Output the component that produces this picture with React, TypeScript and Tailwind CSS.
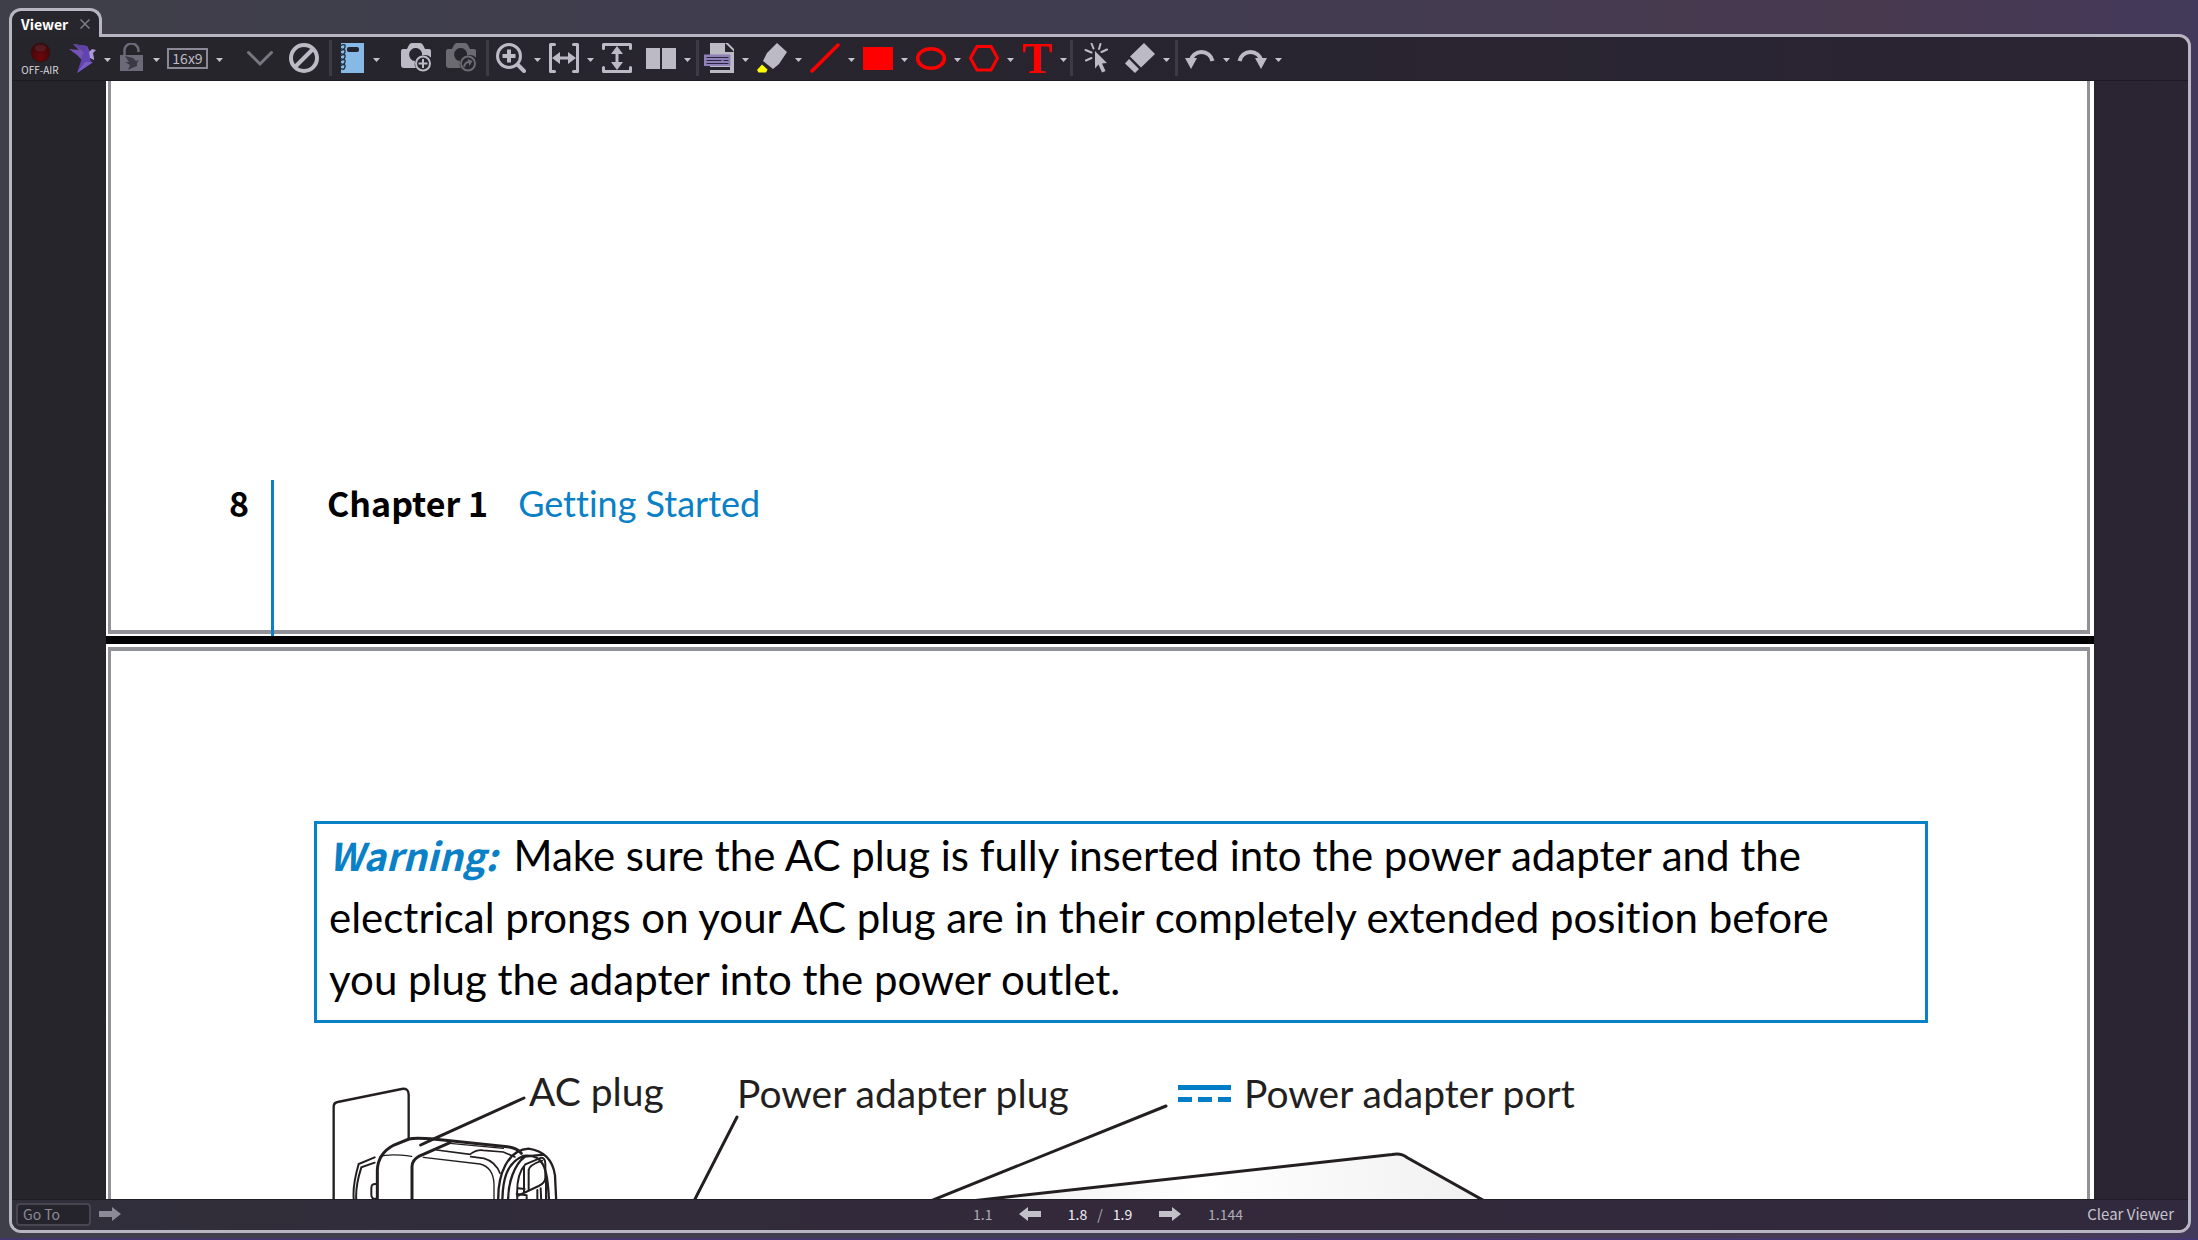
import type { ReactNode } from 'react';

const INK = '#231f20';
const LIGHT = '#bcbbc5';

function Caret({ label }: { label: string }) {
  return (
    <button type="button" aria-label={label} className="flex h-[42px] w-[15px] shrink-0 items-center pl-2">
      <svg viewBox="0 0 7 4" className="mt-1 h-1 w-[7px]">
        <path d="M0 0h7L3.5 4z" fill="#c4c3cc" />
      </svg>
    </button>
  );
}

function Tool({ label, caret, children }: { label: string; caret?: boolean; children: ReactNode }) {
  return (
    <div className="flex shrink-0 items-center">
      <button type="button" aria-label={label} className="flex h-[42px] w-[30px] items-center justify-center">
        {children}
      </button>
      {caret && <Caret label={`${label} options`} />}
    </div>
  );
}

function Icon({ children }: { children: ReactNode }) {
  return (
    <svg viewBox="0 0 30 30" fill="none" className="h-[30px] w-[30px] shrink-0">
      {children}
    </svg>
  );
}

function Separator() {
  return <div className="h-9 w-[3px] shrink-0 bg-[#3c3a45]" />;
}

function CameraBody({ fill }: { fill: string }) {
  return (
    <path
      d="M2 6h4l2-4Q9 0 11 0h8q2 0 3 2l2 4h4q2 0 2 2v6.500a9.200 9.200 0 0 0-9-2a6.500 6.500 0 1 0-7 5.500 9 9 0 0 0 .8 7H3q-3 0-3-3V8q0-2 2-2z"
      fill={fill}
    />
  );
}

function Toolbar() {
  return (
    <div role="toolbar" aria-label="Viewer tools" className="flex h-11 shrink-0 items-center border-b border-[#1c1a22] pb-px pl-[9px]">
      <button type="button" className="mr-[7px] flex h-[42px] w-[38px] shrink-0 flex-col items-center pt-[5px]">
        <svg viewBox="0 0 21 21" className="h-[21px] w-[21px]">
          <defs>
            <radialGradient id="led" cx=".5" cy=".75" r=".7">
              <stop offset="0" stopColor="#6d080b" />
              <stop offset="1" stopColor="#3c0609" />
            </radialGradient>
          </defs>
          <circle cx="10.500" cy="10.500" r="9.500" fill="url(#led)" stroke="#2c161b" />
          <ellipse cx="10.500" cy="6" rx="6" ry="3.500" fill="#5a2a2e" opacity=".6" />
        </svg>
        <span className="text-[10px] leading-[14px] whitespace-nowrap text-[#d9d8df]">OFF-AIR</span>
      </button>
      <Tool label="Broadcast" caret>
        <Icon>
          <path d="M7 1l14 2 4 8-6 9-8-8-8-6 10 1z" fill="#7553b5" />
          <path d="M7 1l14 2-2 7z" fill="#5f42a2" />
          <path d="M21 3l3 7v6l2 4-6 4-9 6 4-12 1-5z" fill="#6343b3" />
          <path d="M23 9l3-3 4 1-3 3 1 5v2l-4-2z" fill="#a99ad6" />
          <path d="M19 19l-8 11 16-11z" fill="#7a5cc0" />
        </Icon>
      </Tool>
      <div className="ml-1">
        <Tool label="Lock" caret>
          <Icon>
            <path d="M9.500 13V8a7 7 0 0 1 14-1v2" stroke="#6c6a78" strokeWidth="2.500" />
            <path d="M5 12h23v16H5z" fill="#6c6a78" />
            <path d="M10 13l8 2 3 3 3-1-2 3v3l-5 2-4 2 2-5-5-3 4 0z" fill="#3b3944" />
          </Icon>
        </Tool>
      </div>
      <div className="ml-[7px] flex shrink-0 items-center">
        <button type="button" className="flex h-[21px] w-[41px] items-center justify-center border-2 border-[#8b8996] text-[14px] leading-none text-[#bcbbc5]">
          16x9
        </button>
        <Caret label="Aspect ratio options" />
      </div>
      <div className="ml-[22px] flex shrink-0 items-center gap-[14px]">
        <Tool label="Collapse">
          <Icon>
            <path d="M3.500 9.500L15 21 26.500 9.500" stroke="#787681" strokeWidth="3" strokeLinecap="round" />
          </Icon>
        </Tool>
        <Tool label="Clear">
          <Icon>
            <circle cx="15" cy="15" r="13" stroke={LIGHT} strokeWidth="4" />
            <path d="M24 6L6 24" stroke={LIGHT} strokeWidth="4" />
          </Icon>
        </Tool>
      </div>
      <div className="mr-[3px] ml-[10px]">
        <Separator />
      </div>
      <Tool label="Notebook" caret>
        <Icon>
          <path d="M6 0h23v30H6z" fill="#86b9e6" />
          <rect x="12" y="4" width="12" height="5" rx="2" fill="#23232b" />
          {[3, 8, 13, 18, 23].map((y) => (
            <path key={y} d={`M5 ${y}q6-3 5 1t-5 1`} stroke="#23303e" strokeWidth="1.300" />
          ))}
        </Icon>
      </Tool>
      <div className="ml-[21px] flex shrink-0 gap-[15px]">
        <Tool label="Add snapshot">
          <Icon>
            <CameraBody fill={LIGHT} />
            <circle cx="22" cy="20.500" r="7" stroke={LIGHT} strokeWidth="2" />
            <path d="M22 16v9M17.500 20.500h9" stroke={LIGHT} strokeWidth="2" />
          </Icon>
        </Tool>
        <Tool label="Send snapshot">
          <Icon>
            <CameraBody fill="#6b6a70" />
            <circle cx="22" cy="20.500" r="7" stroke="#6b6a70" strokeWidth="2" />
            <path d="M18 24q1-5 5-5" stroke="#6b6a70" strokeWidth="2" />
            <path d="M21.500 16l5 2-3 5z" fill="#6b6a70" />
          </Icon>
        </Tool>
      </div>
      <div className="mr-[7px] ml-[10px]">
        <Separator />
      </div>
      <div className="flex shrink-0 items-center gap-2">
        <Tool label="Zoom" caret>
          <Icon>
            <circle cx="13" cy="13" r="11.500" stroke={LIGHT} strokeWidth="3" />
            <path d="M13 6.500v13M6.500 13h13" stroke={LIGHT} strokeWidth="4" />
            <path d="M22 22l6 6" stroke={LIGHT} strokeWidth="4" strokeLinecap="round" />
          </Icon>
        </Tool>
        <Tool label="Fit width" caret>
          <Icon>
            <path d="M5.500 1.500h-4v27h4M24.500 1.500h4v27h-4" stroke={LIGHT} strokeWidth="3" strokeLinecap="round" strokeLinejoin="round" />
            <path d="M8 15h14" stroke={LIGHT} strokeWidth="3" />
            <path d="M3 15l8-6v12zM27 15l-8-6v12z" fill={LIGHT} />
          </Icon>
        </Tool>
        <Tool label="Fit height">
          <Icon>
            <path d="M1.500 5.500v-4h27v4M1.500 24.500v4h27v-4" stroke={LIGHT} strokeWidth="3" strokeLinecap="round" strokeLinejoin="round" />
            <path d="M15 8v14" stroke={LIGHT} strokeWidth="3" />
            <path d="M15 3L9 11h12zM15 27l-6-8h12z" fill={LIGHT} />
          </Icon>
        </Tool>
        <div className="ml-[6px]">
          <Tool label="Columns" caret>
            <Icon>
              <path d="M0 5h14v21H0zM16 5h14v21H16z" fill={LIGHT} />
            </Icon>
          </Tool>
        </div>
      </div>
      <div className="mx-[5px]">
        <Separator />
      </div>
      <div className="flex shrink-0 items-center gap-2">
        <Tool label="Text layer" caret>
          <Icon>
            <path d="M6 0h15v9h9v21H6z" fill={LIGHT} />
            <path d="M21 0l9 9V6l-6-6z" fill={LIGHT} />
            <path d="M22.500 1.500v6.500h6.500z" fill="#25242c" />
            <path d="M6 24h20v3H6z" fill="#25242c" />
            <rect x="0" y="11.500" width="26.500" height="11.500" fill="#8f80b8" />
            <path d="M2.500 14.500h22M2.500 17.500h15M19.500 17.500h5M2.500 20.500h22" stroke="#2b2440" strokeWidth="1.200" />
          </Icon>
        </Tool>
        <Tool label="Highlighter" caret>
          <Icon>
            <path d="M20 0l10 9-8 12-6 5-10-8 4-8z" fill={LIGHT} />
            <path d="M5 21.500l5.500 5-1.500 3H1.500L0 27z" fill="#ffff00" />
          </Icon>
        </Tool>
        <Tool label="Line" caret>
          <Icon>
            <path d="M2 28L28 2" stroke="#ff0000" strokeWidth="3.500" strokeLinecap="round" />
          </Icon>
        </Tool>
        <Tool label="Rectangle" caret>
          <Icon>
            <path d="M0 4h30v23H0z" fill="#ff0000" />
          </Icon>
        </Tool>
        <Tool label="Ellipse" caret>
          <Icon>
            <ellipse cx="15" cy="15.500" rx="13.300" ry="9.700" stroke="#ff0000" strokeWidth="3.500" />
          </Icon>
        </Tool>
        <Tool label="Polygon" caret>
          <Icon>
            <path d="M8 3.500h14l6.500 11.500L22 27H8L1.500 15z" stroke="#ff0000" strokeWidth="3" />
          </Icon>
        </Tool>
        <Tool label="Text" caret>
          <span className="font-['Liberation_Serif',serif] text-[45px] leading-[30px] font-bold text-[#ff0000]">T</span>
        </Tool>
      </div>
      <div className="mr-[10px] ml-[3px]">
        <Separator />
      </div>
      <div className="flex shrink-0 items-center gap-3">
        <Tool label="Pointer">
          <Icon>
            <path d="M12 8l12 12-5 .5 3.500 7.500-3.500 1.500-3.500-8-3.500 4z" fill={LIGHT} />
            <path d="M8.500.5l2 5M17.500 1l-1.500 5M24 6.500l-5.500 2.500M2.500 7l6 2.500M3 17.500l5.500-2.500" stroke={LIGHT} strokeWidth="2" strokeLinecap="round" />
          </Icon>
        </Tool>
        <Tool label="Eraser" caret>
          <Icon>
            <path d="M19 0l11 11-14 13.500L5 13.500z" fill={LIGHT} />
            <path d="M4 16l10 10-4 4-10-9.500z" fill={LIGHT} />
          </Icon>
        </Tool>
      </div>
      <div className="mr-[7px] ml-[5px]">
        <Separator />
      </div>
      <div className="flex shrink-0 items-center gap-[7px]">
        <Tool label="Undo" caret>
          <Icon>
            <path d="M27.500 18a11.200 11.200 0 0 0-22 0" stroke={LIGHT} strokeWidth="4" />
            <path d="M0 15h12L6 26z" fill={LIGHT} />
          </Icon>
        </Tool>
        <Tool label="Redo" caret>
          <Icon>
            <path d="M2.500 18a11.200 11.200 0 0 1 22 0" stroke={LIGHT} strokeWidth="4" />
            <path d="M30 15H18l6 11z" fill={LIGHT} />
          </Icon>
        </Tool>
      </div>
    </div>
  );
}

function Illustration() {
  return (
    <svg
      viewBox="330 1080 1160 120"
      fill="none"
      stroke={INK}
      strokeWidth="2"
      strokeLinecap="round"
      className="absolute top-0 left-0 h-[120px] w-[1160px]"
    >
      <defs>
        <linearGradient id="lid" x1="0" x2="1" y1="0" y2="0">
          <stop offset="0" stopColor="#ededed" />
          <stop offset=".45" stopColor="#ffffff" />
          <stop offset="1" stopColor="#f0f0f1" />
        </linearGradient>
      </defs>
      <path d="M962 1202l430-47.500q9-2 15 3l82 46" fill="url(#lid)" strokeWidth="3" />
      <path d="M1166 1106L928 1202" strokeWidth="3" />
      <path d="M737 1117l-43 84" strokeWidth="3" />
      <g transform="translate(300 1040) scale(.333333)">
        <path d="M101 485V200q0-12 12-14l192-39q20-4 21 16v134" strokeWidth="7" />
        <path d="M163 490c-8-40 2-80 13-118l48-20M170 490c-6-40 5-80 14-108l40-14" strokeWidth="6" />
        <path d="M232 490V390q2-50 50-75l45-18q20-5 80 1l215 22q30 4 42 20" strokeWidth="9" />
        <path d="M240 350q25-10 95-1M370 352l170 20q40 10 42 60v60M450 310l160 15" strokeWidth="4" />
        <path d="M336 490V380q0-20 22-32l92-40" strokeWidth="9" />
        <path d="M410 330l100 13q20-15 40-12l60 5 35 15M512 350l40 5q35 10 48 45" strokeWidth="5" />
        <path d="M228 432q-14-2-14 12v20q0 14 14 12" strokeWidth="6" />
        <path d="M595 490c-4-90 30-160 90-164q70 10 80 80l4 84M607 490c0-70 12-120 62-142 60-8 75 30 78 142M625 490c-4-60 20-120 50-140l55-6" strokeWidth="7" />
        <path d="M652 478c-4-60 10-90 24-105l48-20q12 0 12 20v40q0 15-20 25l-64 30" strokeWidth="6" />
        <path d="M686 450v-60q2-15 40-28M672 455v-75M654 445l20 2M712 450v40M722 445l2 45M738 410v80M650 462l30 4M680 470v20" strokeWidth="6" />
        <path d="M362 315l36-17L672 174" strokeWidth="9" />
      </g>
      <g stroke="#007dc6" strokeWidth="5" strokeLinecap="butt">
        <path d="M1178 1087.500h53" />
        <path d="M1178 1099.500h53" strokeDasharray="14 6" />
      </g>
    </svg>
  );
}

function Document() {
  return (
    <main className="mx-[94px] flex min-h-0 flex-1 flex-col overflow-hidden bg-black font-[Lato,sans-serif] [font-variant-ligatures:none]">
      <section className="shrink-0 bg-white pr-1 pb-0.5 pl-0.5">
        <div className="flex h-[553px] items-end border-x-[3px] border-b-[4px] border-[#919297] pl-[118px]">
          <div className="-mb-1.5 flex items-start">
            <span className="w-[42px] font-['Noto_Sans_CJK_SC',sans-serif] text-[34px] leading-[46px] font-bold text-black">8</span>
            <div className="flex h-[156px] items-start border-l-[3px] border-[#0a80c6] pl-[53px]">
              <h2 className="flex items-baseline gap-[30px]">
                <span className="font-['Noto_Sans_CJK_SC',sans-serif] text-[34px] leading-[46px] font-bold text-black">Chapter 1</span>
                <span className="text-[36px] leading-[46px] text-[#0a80c6]">Getting Started</span>
              </h2>
            </div>
          </div>
        </div>
      </section>
      <section className="mt-2 shrink-0 bg-white pt-[3px] pr-1 pl-0.5">
        <div className="border-x-[3px] border-t-[4px] border-[#919297] pt-[170px] pr-[159px] pl-[203px]">
          <p className="border-[3px] border-[#0a80c6] pr-14 pb-[10px] pl-3 text-[42px] leading-[62px] text-black">
            <strong className="mr-4 font-['Noto_Sans_CJK_SC',sans-serif] text-[38px] leading-10 font-bold text-[#0a80c6] italic">Warning:</strong>
            Make sure the AC plug is fully inserted into the power adapter and the electrical prongs on your AC plug are in their
            completely extended position before you plug the adapter into the power outlet.
          </p>
          <figure className="relative mt-[57px] ml-4 h-[120px]">
            <Illustration />
            <figcaption className="relative flex pl-[199px] text-[39px] leading-[46px] whitespace-nowrap text-[#231f20]">
              <span className="-mt-3 w-[208px]">AC plug</span>
              <span className="-mt-2.5 w-[507px]">Power adapter plug</span>
              <span className="-mt-2.5">Power adapter port</span>
            </figcaption>
          </figure>
        </div>
      </section>
    </main>
  );
}

function Arrow({ left }: { left?: boolean }) {
  return (
    <svg viewBox="0 0 22 14" className={left ? 'h-[14px] w-[22px] rotate-180' : 'h-[14px] w-[22px]'}>
      <path d="M0 4h13V0l9 7-9 7v-4H0z" fill="currentColor" />
    </svg>
  );
}

function Footer() {
  return (
    <footer className="grid h-[31px] shrink-0 grid-cols-[1fr_auto_1fr] items-center border-t border-[#1f1d26] bg-[linear-gradient(90deg,#302f3a,#33293a_50%,#31293d)] pb-0.5 text-[14px] leading-5 text-[#aeacb6]">
      <form className="flex items-center gap-2 pl-1" onSubmit={(e) => e.preventDefault()}>
        <input
          aria-label="Go To"
          placeholder="Go To"
          className="h-[23px] w-[75px] rounded border-2 border-[#484651] bg-[#25242d] pl-[5px] text-[14px] placeholder:text-[#8d8b96]"
        />
        <button type="submit" aria-label="Go" className="text-[#8d8a98]">
          <Arrow />
        </button>
      </form>
      <nav aria-label="Pages" className="flex items-center">
        <span className="w-[46px]">1.1</span>
        <button type="button" aria-label="Previous page" className="text-[#c2c1c9]">
          <Arrow left />
        </button>
        <span className="flex w-[118px] justify-center gap-[10px] text-[#f0eff4]">
          <span>1.8</span>
          <span className="text-[#aeacb6]">/</span>
          <span>1.9</span>
        </span>
        <button type="button" aria-label="Next page" className="text-[#c2c1c9]">
          <Arrow />
        </button>
        <span className="flex w-[46px] justify-end whitespace-nowrap">
          <span className="-mr-4">1.144</span>
        </span>
      </nav>
      <button type="button" className="justify-self-end pr-[14px] text-[15px] text-[#c6c4cf]">
        Clear Viewer
      </button>
    </footer>
  );
}

export default function App() {
  return (
    <div className="flex h-screen flex-col overflow-hidden border-b-2 border-[#44356f] bg-[linear-gradient(90deg,#3f3f49,#413d51_50%,#48394f_85%,#43395a)] pt-2 pr-[7px] pb-[5px] pl-[9px] font-['Noto_Sans_CJK_SC',sans-serif]">
      <div role="tablist" className="z-10 -mb-[3px] flex shrink-0">
        <div className="flex h-[29px] w-[93px] items-center rounded-t-xl border-[3px] border-b-0 border-[#b7b6c2] bg-[#27262d] pb-px pl-[9px]">
          <button type="button" role="tab" aria-selected="true" className="text-[14px] leading-5 font-bold text-white">
            Viewer
          </button>
          <button type="button" aria-label="Close Viewer" className="ml-3">
            <svg viewBox="0 0 10 10" className="h-[10px] w-[10px]">
              <path d="M.5.5l9 9M9.500.5l-9 9" stroke="#7d7b88" strokeWidth="1.500" />
            </svg>
          </button>
        </div>
      </div>
      <div className="flex min-h-0 flex-1 flex-col overflow-hidden rounded-xl rounded-tl-none border-[3px] border-[#b7b6c2] bg-[linear-gradient(90deg,#26252b,#2a2433)]">
        <Toolbar />
        <Document />
        <Footer />
      </div>
    </div>
  );
}
